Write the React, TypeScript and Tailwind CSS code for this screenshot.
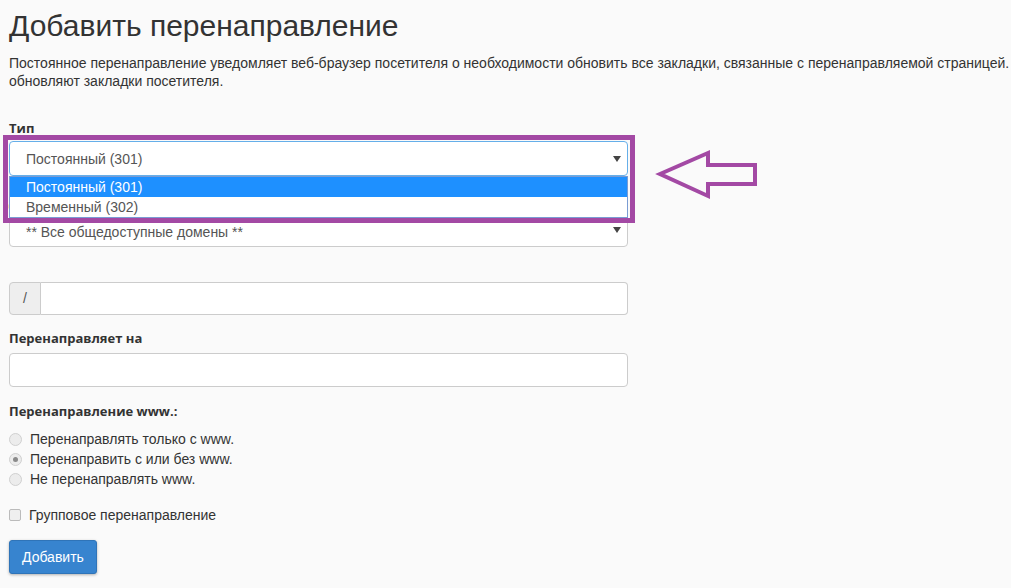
import React from "react";

const Caret = () => (
  <svg width="8" height="6" viewBox="0 0 8 6" className="absolute right-[6px] top-1/2 -translate-y-1/2">
    <path d="M0 0 H8 L4 6 Z" fill="#444" />
  </svg>
);

const Radio = ({ checked, label }: { checked?: boolean; label: string }) => (
  <div className="flex items-center h-[20px]">
    <span className="ml-[9px] w-[13px] h-[13px] rounded-full border border-[#d0d0d0] bg-[#ececec] flex items-center justify-center">
      {checked && <span className="w-[5px] h-[5px] rounded-full bg-[#8a8a8a]" />}
    </span>
    <span className="ml-[8px] text-[14px] text-[#333]">{label}</span>
  </div>
);

export default function App() {
  const label = "block h-[20px] leading-[20px] text-[13px] font-bold text-[#333] [font-family:'Open_Sans',sans-serif]";
  return (
    <div className="relative w-[1011px] h-[588px] overflow-hidden bg-[#fafafa] text-[#333] [font-family:'Liberation_Sans',Arial,sans-serif]">
      <div className="pl-[9px]">
        <h1 className="mt-[9px] text-[30px] leading-[33px] font-normal text-[#333] whitespace-nowrap">
          Добавить перенаправление
        </h1>
        <p className="mt-[12px] text-[14px] leading-[18px] whitespace-nowrap text-[#333]">
          Постоянное перенаправление уведомляет веб-браузер посетителя о необходимости обновить все закладки, связанные с перенаправляемой страницей. Временные перенаправления не
          <br />
          обновляют закладки посетителя.
        </p>

        <div className="w-[619px] mt-[28px]">
          {/* Type */}
          <label className={label}>Тип</label>
          <div className="relative mt-[3px]">
            <div className="relative h-[35px] rounded-[4px] border border-[#66afe9] bg-white flex items-center pl-[16px] pt-[1px] text-[14px] text-[#555]">
              Постоянный (301)
              <Caret />
            </div>
            <div className="absolute left-0 top-full w-full z-10 bg-white border border-[#7a9cd3] text-[14px]">
              <div className="h-[20px] leading-[20px] pl-[16px] bg-[#1e90ff] text-white">Постоянный (301)</div>
              <div className="h-[20px] leading-[20px] pl-[16px] text-[#555]">Временный (302)</div>
            </div>
          </div>

          {/* Domain */}
          <div className="mt-[15px]">
            <label className={label}>Домен</label>
            <div className="relative mt-[2px] h-[34px] rounded-[4px] border border-[#ccc] bg-white flex items-center pl-[16px] pt-[4px] text-[14px] text-[#555]">
              ** Все общедоступные домены **
              <Caret />
            </div>
          </div>

          {/* Path */}
          <div className="mt-[35px] flex h-[33px]">
            <span className="w-[32px] flex items-center justify-center bg-[#eee] border border-[#ccc] rounded-l-[4px] text-[14px] text-[#555]">
              /
            </span>
            <span className="flex-1 border border-l-0 border-[#ccc] rounded-r-[4px] bg-white" />
          </div>

          {/* Redirects to */}
          <div className="mt-[13px]">
            <label className={label}>Перенаправляет на</label>
            <div className="mt-[5px] h-[34px] rounded-[4px] border border-[#ccc] bg-white" />
          </div>

          {/* www */}
          <div className="mt-[14px]">
            <label className={label}>Перенаправление www.:</label>
            <div className="mt-[8px] -ml-[9px]">
              <Radio label="Перенаправлять только с www." />
              <Radio checked label="Перенаправить с или без www." />
              <Radio label="Не перенаправлять www." />
            </div>
          </div>

          <div className="mt-[16px] flex items-center h-[20px]">
            <span className="w-[12px] h-[12px] rounded-[2px] border border-[#bbb] bg-[#efefef]" />
            <span className="ml-[8px] text-[14px] text-[#333]">Групповое перенаправление</span>
          </div>

          <button className="mt-[15px] h-[34px] px-[12px] rounded-[3px] bg-[#3784cf] border border-[#2f74b8] text-white text-[14px] shadow-[0_1px_3px_rgba(0,0,0,0.3)]">
            Добавить
          </button>
        </div>
      </div>

      {/* annotation box */}
      <div className="absolute left-[3px] top-[135px] w-[632px] h-[88px] border-[5px] border-[#a349a4] z-20 pointer-events-none" />
      {/* annotation arrow */}
      <svg className="absolute left-0 top-0 z-20 pointer-events-none" width="1011" height="588">
        <path
          d="M660 174 L708 153 L708 165 L755 165 L755 184 L708 184 L708 196 Z"
          fill="none"
          stroke="#a349a4"
          strokeWidth="4"
          strokeLinejoin="miter"
        />
      </svg>
    </div>
  );
}
